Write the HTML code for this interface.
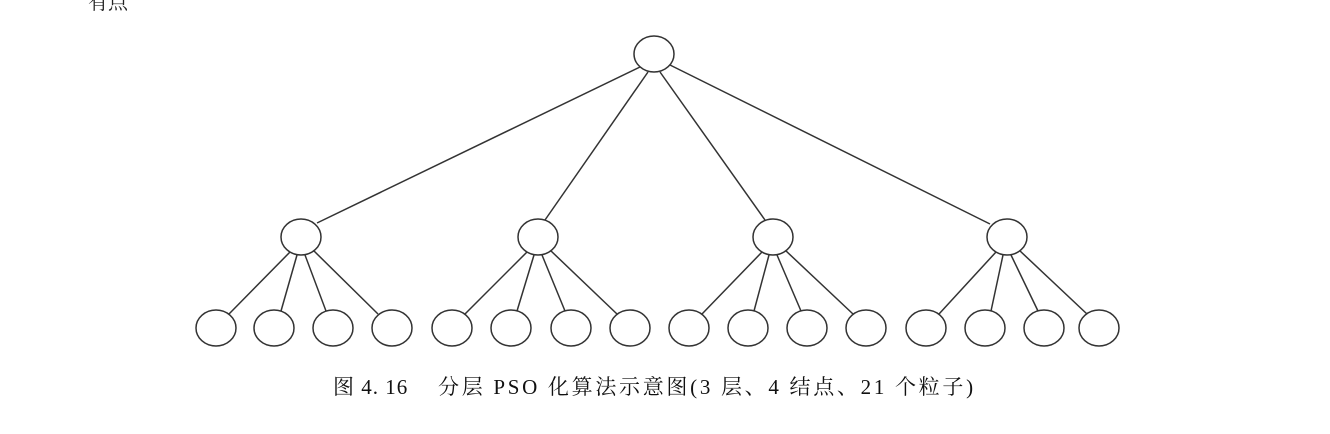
<!DOCTYPE html>
<html><head><meta charset="utf-8"><style>
html,body{margin:0;padding:0;background:#fff;width:1330px;height:434px;overflow:hidden;position:relative}
.cap{position:absolute;top:371px;font:21px "Liberation Serif","Noto Serif CJK SC",serif;color:#111;white-space:pre;letter-spacing:1.5px}
.top{position:absolute;left:88px;top:-14px;font:20px "Liberation Serif","Noto Serif CJK SC",serif;color:#222}
</style></head><body>
<div class="top">有点</div>
<svg width="1330" height="434" style="position:absolute;left:0;top:0" stroke="#333" stroke-width="1.5" fill="#fff">
<line x1="640" y1="67" x2="317" y2="223"/>
<line x1="648" y1="72" x2="545" y2="220"/>
<line x1="660" y1="72" x2="765" y2="220"/>
<line x1="670" y1="65" x2="990" y2="224"/>
<line x1="290" y1="252" x2="229" y2="314"/><line x1="297" y1="255" x2="281" y2="311"/><line x1="305" y1="255" x2="326" y2="311"/><line x1="313" y1="250" x2="378" y2="314"/>
<line x1="527" y1="252" x2="465" y2="314"/><line x1="534" y1="255" x2="517" y2="311"/><line x1="542" y1="255" x2="565" y2="311"/><line x1="550" y1="250" x2="617" y2="314"/>
<line x1="762" y1="252" x2="702" y2="314"/><line x1="769" y1="255" x2="754" y2="311"/><line x1="777" y1="255" x2="801" y2="311"/><line x1="785" y1="250" x2="853" y2="314"/>
<line x1="996" y1="252" x2="939" y2="314"/><line x1="1003" y1="255" x2="991" y2="311"/><line x1="1011" y1="255" x2="1038" y2="311"/><line x1="1019" y1="250" x2="1087" y2="314"/>
<ellipse cx="654" cy="54" rx="20" ry="18"/>
<ellipse cx="301" cy="237" rx="20" ry="18"/>
<ellipse cx="538" cy="237" rx="20" ry="18"/>
<ellipse cx="773" cy="237" rx="20" ry="18"/>
<ellipse cx="1007" cy="237" rx="20" ry="18"/>
<ellipse cx="216" cy="328" rx="20" ry="18"/><ellipse cx="274" cy="328" rx="20" ry="18"/><ellipse cx="333" cy="328" rx="20" ry="18"/><ellipse cx="392" cy="328" rx="20" ry="18"/>
<ellipse cx="452" cy="328" rx="20" ry="18"/><ellipse cx="511" cy="328" rx="20" ry="18"/><ellipse cx="571" cy="328" rx="20" ry="18"/><ellipse cx="630" cy="328" rx="20" ry="18"/>
<ellipse cx="689" cy="328" rx="20" ry="18"/><ellipse cx="748" cy="328" rx="20" ry="18"/><ellipse cx="807" cy="328" rx="20" ry="18"/><ellipse cx="866" cy="328" rx="20" ry="18"/>
<ellipse cx="926" cy="328" rx="20" ry="18"/><ellipse cx="985" cy="328" rx="20" ry="18"/><ellipse cx="1044" cy="328" rx="20" ry="18"/><ellipse cx="1099" cy="328" rx="20" ry="18"/>
</svg>
<div class="cap" style="left:333px;letter-spacing:1px">图 4. 16</div>
<div class="cap" style="left:438px;letter-spacing:2.7px">分层 PSO 化算法示意图(3 层、4 结点、21 个粒子)</div>
</body></html>
